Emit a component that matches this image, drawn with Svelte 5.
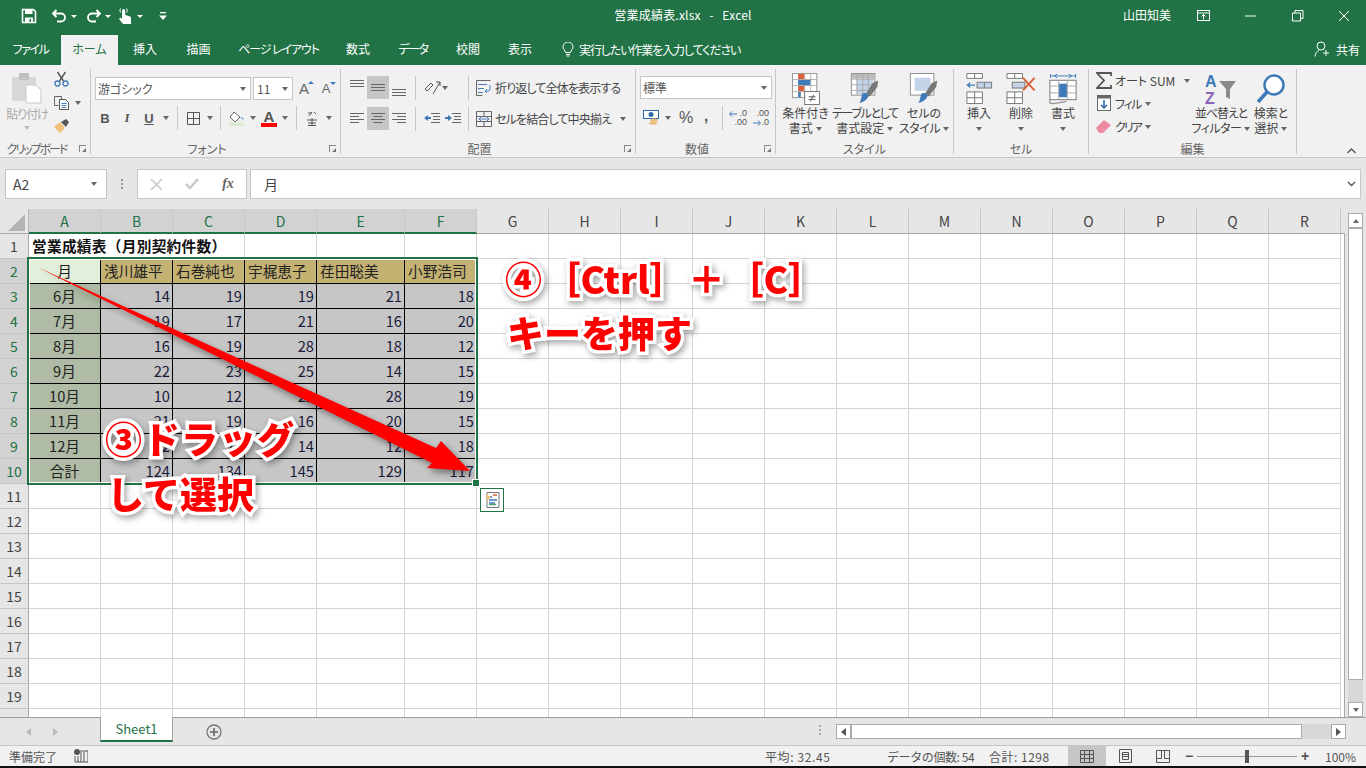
<script>
  const colNames = 'ABCDEFGHIJKLMNOPQR'.split('');
  const table = [
    ['営業成績表（月別契約件数）'],
    ['月', '浅川雄平', '石巻純也', '宇梶恵子', '荏田聡美', '小野浩司'],
    ['6月', 14, 19, 19, 21, 18],
    ['7月', 19, 17, 21, 16, 20],
    ['8月', 16, 19, 28, 18, 12],
    ['9月', 22, 23, 25, 14, 15],
    ['10月', 10, 12, 22, 28, 19],
    ['11月', 21, 19, 16, 20, 15],
    ['12月', 22, 25, 14, 12, 18],
    ['合計', 124, 134, 145, 129, 117]
  ];
  const rows = Array.from({ length: 20 }, (_, i) => i + 1);
  function cellClass(r, c) {
    if (r === 1) return c === 0 ? 'title noline' : c === 1 ? 'noline' : '';
    if (r > 10 || c > 5) return '';
    if (r === 2 && c === 0) return 'tb active center';
    if (r === 2) return 'tb tan';
    if (c === 0) return 'tb month center';
    return 'tb sel numr';
  }
  const cellText = (r, c) => (r <= 10 && table[r - 1][c] !== undefined ? table[r - 1][c] : '');
</script>

<div class="app">
  <div class="titlebar">
    <div class="qat">
      <svg class="i s-save" width="16" height="16" viewBox="0 0 16 16"><path d="M1.500 1.500h11l2 2v11h-13z" fill="none" stroke="#fff" stroke-width="1.600"/><rect x="4" y="2" width="7.500" height="4" fill="#fff"/><rect x="4" y="9.500" width="8" height="5" fill="#fff"/><rect x="8.500" y="11" width="1.500" height="3" fill="#217346"/></svg>
      <svg class="i s-undo" width="16" height="16" viewBox="0 0 16 16"><path d="M5.500 2 2 5.500 5.500 9M2.500 5.500H10a4 4 0 0 1 0 8H6" fill="none" stroke="#fff" stroke-width="1.800"/></svg>
      <span class="wcaret c-undo"></span>
      <svg class="i s-redo" width="16" height="16" viewBox="0 0 16 16"><path d="M10.500 2 14 5.500 10.500 9M13.500 5.500H6a4 4 0 0 0 0 8h4" fill="none" stroke="#fff" stroke-width="1.800"/></svg>
      <span class="wcaret c-redo"></span>
      <svg class="i s-touch" width="14" height="18" viewBox="0 0 14 18"><path d="M4 9V3.500a1.600 1.600 0 0 1 3.200 0V8l4.300 1.200c1 .3 1.500 1 1.500 2V17H5L1.500 12.500c-.8-1 .5-2.200 1.500-1.400L4 12" fill="#fff"/><path d="M2.500 5.500a3.800 3.800 0 0 1 0-4M8.700 1.500a3.800 3.800 0 0 1 0 4" stroke="#fff" fill="none"/></svg>
      <span class="wcaret c-touch"></span>
      <svg class="i s-cust" width="8" height="9" viewBox="0 0 8 9"><rect x="1" y="0" width="6" height="1.300" fill="#fff"/><path d="M0 3.500h8L4 8z" fill="#fff"/></svg>
    </div>
    <div class="doc">営業成績表.xlsx&nbsp;&nbsp;&nbsp;-&nbsp;&nbsp;&nbsp;Excel</div>
    <div class="winctl">
      <span class="uname">山田知美</span>
      <svg class="i w1" width="14" height="12" viewBox="0 0 14 12"><rect x=".5" y=".5" width="12" height="10" fill="none" stroke="#fff"/><path d="M.5 3h12M6.500 9.500V4.500M4.500 6.500l2-2 2 2" stroke="#fff" fill="none"/></svg>
      <svg class="i w2" width="12" height="2" viewBox="0 0 12 2"><rect width="11" height="1" y=".5" fill="#fff"/></svg>
      <svg class="i w3" width="12" height="12" viewBox="0 0 12 12"><path d="M.5 3h8v8h-8zM3 3V.500h8v8H8.500" fill="none" stroke="#fff"/></svg>
      <svg class="i w4" width="12" height="12" viewBox="0 0 12 12"><path d="M1 1l10 10M11 1L1 11" stroke="#fff" fill="none"/></svg>
    </div>
  </div>

  <div class="tabs">
    <span class="tab t61 l15">ファイル</span>
    <span class="tab t57 cur">ホーム</span>
    <span class="tab t54">挿入</span>
    <span class="tab t53">描画</span>
    <span class="tab t107 l1">ページ レイアウト</span>
    <span class="tab t52">数式</span>
    <span class="tab t58 l15">データ</span>
    <span class="tab t52">校閲</span>
    <span class="tab t52">表示</span>
    <span class="tell">
      <svg class="i" width="12" height="15" viewBox="0 0 12 15"><path d="M3.500 10.500C3 8 1 7.500 1 5a5 5 0 0 1 10 0c0 2.500-2 3-2.500 5.500zM4 12.500h4M4.500 14h3" fill="none" stroke="#fff"/></svg>
      <span class="l1">実行したい作業を入力してください</span>
    </span>
    <span class="share">
      <svg class="i" width="16" height="16" viewBox="0 0 16 16"><circle cx="7" cy="5" r="4" fill="none" stroke="#fff"/><path d="M1 15.500c0-3.500 2-5 4-6M9 12h6M12 9v6" fill="none" stroke="#fff"/></svg>
      <span>共有</span>
    </span>
  </div>

  <div class="ribbon">
    <section class="grp g-clip">
      <div class="body clip">
        <div class="paste">
          <svg class="i" width="30" height="31" viewBox="0 0 30 31"><rect x="0" y="4" width="24" height="24" rx="2" fill="#d9d6d6"/><rect x="7" y="0" width="10" height="7" rx="1" fill="#c2bfbf"/><path d="M14 12h10l5 5v13H14z" fill="#fff" stroke="#c8c8c8"/></svg>
          <span class="lbl mut l1">貼り付け</span>
          <span class="dd mutd"></span>
        </div>
        <div class="clipside">
          <svg class="i" width="15" height="16" viewBox="0 0 15 16"><path d="M3.500 1l6 9M11.500 1l-6 9" stroke="#555" stroke-width="1.400" fill="none"/><circle cx="3.500" cy="12.500" r="2.500" fill="none" stroke="#3f7ab8" stroke-width="1.300"/><circle cx="11.500" cy="12.500" r="2.500" fill="none" stroke="#3f7ab8" stroke-width="1.300"/></svg>
          <div class="copyrow">
            <svg class="i" width="16" height="14" viewBox="0 0 16 14"><path d="M.5.500h7v3M.5.500v9h4" fill="none" stroke="#666"/><path d="M5.500 3.500h6l3 3v7h-9z" fill="#fff" stroke="#555"/><path d="M7.500 7.500h5M7.500 9.500h5M7.500 11.500h5" stroke="#4a7ebb"/></svg>
            <span class="dd w14"></span>
          </div>
          <svg class="i" width="16" height="14" viewBox="0 0 16 14"><path d="M0 8l6-5 5 6-5 5z" fill="#f0c27b"/><path d="M7 3l5-3 3 3-3 5z" fill="#555"/></svg>
        </div>
      </div>
      <div class="glabel lp"><span class="l2">クリップボード</span><span class="launch"></span></div>
    </section>

    <section class="grp g-font">
      <div class="body font">
        <div class="frow1">
          <div class="combo fname"><span>游ゴシック</span><span class="dd"></span></div>
          <div class="combo fsize"><span>11</span><span class="dd"></span></div>
          <span class="growA big">A<i class="tri up"></i></span>
          <span class="growA small">A<i class="tri down"></i></span>
        </div>
        <div class="frow2">
          <span class="fb w22 bold">B</span>
          <span class="fb w22 ital">I</span>
          <span class="fb w22 under">U</span>
          <span class="dd w12"></span>
          <span class="vsep m5"></span>
          <span class="fb w20"><svg class="i" width="13" height="13" viewBox="0 0 13 13"><path d="M.5.500h12v12H.5zM6.500.5v12M.5 6.500h12" fill="none" stroke="#555"/></svg></span>
          <span class="dd w14"></span>
          <span class="vsep m3"></span>
          <span class="fb w24"><svg class="i" width="16" height="15" viewBox="0 0 16 15"><path d="M5 1l6 5-5 5-5-5z" fill="#fff" stroke="#666"/><path d="M11 6c2 0 3.500 1 4 3z" fill="#3f7ab8"/><rect x="0" y="12" width="15" height="3" fill="#d8ebd0"/></svg></span>
          <span class="dd w8"></span>
          <span class="fb w24 fontA">A</span>
          <span class="dd w8"></span>
          <span class="vsep m-ph"></span>
          <span class="fb w20"><svg class="i" width="12" height="15" viewBox="0 0 12 15"><path d="M2 2h4M6 1L3 5M8 1l2 2" stroke="#555" fill="none"/><path d="M1 9h10M6 7v8M2 12h8M2 14.500h8" stroke="#555" fill="none"/></svg></span>
          <span class="dd w14"></span>
        </div>
      </div>
      <div class="glabel lp"><span>フォント</span><span class="launch"></span></div>
    </section>

    <section class="grp g-align">
      <div class="body align">
        <div class="arow">
          <span class="ab w20"><svg class="i" width="14" height="20" viewBox="0 0 14 20"><path d="M0 2.500h14M0 5.500h14M0 8.500h14" stroke="#666" fill="none"/></svg></span>
          <span class="ab w22 on"><svg class="i" width="14" height="20" viewBox="0 0 14 20"><path d="M0 6.500h14M0 9.500h14M0 12.500h14" stroke="#666" fill="none"/></svg></span>
          <span class="ab w20"><svg class="i" width="14" height="20" viewBox="0 0 14 20"><path d="M0 11.500h14M0 14.500h14M0 17.500h14" stroke="#666" fill="none"/></svg></span>
          <span class="vsep m6"></span>
          <span class="ab w20"><svg class="i" width="17" height="15" viewBox="0 0 17 15"><path d="M9 14L16 2M16 2h-4M16 2v4" stroke="#555" fill="none"/><path d="M1 9l6-6M3 11l6-6M1 9l2 2M7 3l2 2" stroke="#555" fill="none"/></svg></span>
          <span class="dd w6"></span>
          <span class="vsep m-w1"></span>
          <span class="wrapbtn"><svg class="i" width="17" height="16" viewBox="0 0 17 16"><path d="M.5.500h14M.5 15.500h6M.5.500v15" fill="none" stroke="#666"/><path d="M2 4.500h9M2 8.500h6M2 12.500h5" stroke="#4a7ebb"/><path d="M14 5v4a2 2 0 0 1-2 2H9M11 9l-2 2 2 2" stroke="#4a7ebb" fill="none"/></svg><span class="lbl l08">折り返して全体を表示する</span></span>
        </div>
        <div class="arow">
          <span class="ab w20"><svg class="i" width="14" height="14" viewBox="0 0 14 14"><path d="M0 1.500h14M0 4.500h9M0 7.500h14M0 10.500h9" stroke="#666" fill="none"/></svg></span>
          <span class="ab w22 on"><svg class="i" width="14" height="14" viewBox="0 0 14 14"><path d="M0 1.500h14M2.500 4.500h9M0 7.500h14M2.500 10.500h9" stroke="#666" fill="none"/></svg></span>
          <span class="ab w20"><svg class="i" width="14" height="14" viewBox="0 0 14 14"><path d="M0 1.500h14M5 4.500h9M0 7.500h14M5 10.500h9" stroke="#666" fill="none"/></svg></span>
          <span class="vsep m6"></span>
          <span class="ab w20"><svg class="i" width="16" height="12" viewBox="0 0 16 12"><path d="M7 .5h9M9 3.500h7M9 6.500h7M7 9.500h9" stroke="#666" fill="none"/><path d="M0 5l4-3v2h3v2H4v2z" fill="#3f7ab8"/></svg></span>
          <span class="ab w22"><svg class="i" width="16" height="12" viewBox="0 0 16 12"><path d="M7 .5h9M9 3.500h7M9 6.500h7M7 9.500h9" stroke="#666" fill="none"/><path d="M7 5L3 2v2H0v2h3v2z" fill="#3f7ab8"/></svg></span>
          <span class="vsep m-w2"></span>
          <span class="wrapbtn"><svg class="i" width="17" height="16" viewBox="0 0 17 16"><path d="M.5.500h15v15H.5zM.5 5.500h15M.5 10.500h15M8 .5v5M8 10.500v5" fill="none" stroke="#666"/><path d="M3 8h10" stroke="#4a7ebb"/><path d="M5 6L3 8l2 2M11 6l2 2-2 2" stroke="#4a7ebb" fill="none"/></svg><span class="lbl l08">セルを結合して中央揃え</span><span class="dd w-m"></span></span>
        </div>
      </div>
      <div class="glabel lp"><span>配置</span><span class="launch"></span></div>
    </section>

    <section class="grp g-num">
      <div class="body numbody">
        <div class="combo nfmt"><span>標準</span><span class="dd"></span></div>
        <div class="nrow">
          <span class="fb w20"><svg class="i" width="16" height="16" viewBox="0 0 16 16"><rect x=".5" y=".5" width="15" height="8" fill="#fff" stroke="#2f6aa8"/><circle cx="8" cy="4.500" r="2.500" fill="#2f6aa8"/><ellipse cx="11" cy="10" rx="4" ry="1.500" fill="#eabb72"/><ellipse cx="10" cy="13" rx="4" ry="1.500" fill="#eabb72"/></svg></span>
          <span class="dd w14"></span>
          <span class="fb w22 pct">%</span>
          <span class="fb w18 comma">,</span>
          <span class="vsep m-n"></span>
          <span class="dec"><span>.0</span><span>.00</span><svg class="arr" width="8" height="6" viewBox="0 0 8 6"><path d="M8 3H1M3 .5L.5 3 3 5.500" stroke="#3f7ab8" fill="none"/></svg></span>
          <span class="dec r"><span>.00</span><span>.0</span><svg class="arr" width="8" height="6" viewBox="0 0 8 6"><path d="M0 3h7M5 .5L7.500 3 5 5.500" stroke="#3f7ab8" fill="none"/></svg></span>
        </div>
      </div>
      <div class="glabel lp"><span>数値</span><span class="launch"></span></div>
    </section>

    <section class="grp g-style">
      <div class="body bigs">
        <div class="bigbtn w57">
          <svg class="i" width="32" height="37" viewBox="0 0 32 37"><rect x=".5" y=".5" width="28" height="28" fill="#fff" stroke="#8a8a8a"/><path d="M.5 7.500h28M.5 14.500h28M.5 21.500h28M7.500 0v29M14.500 0v29M21.500 0v29" stroke="#aaa"/><rect x="7" y="1" width="7" height="6" fill="#d9603a"/><rect x="7" y="8" width="14" height="6" fill="#3f7ab8"/><rect x="7" y="15" width="7" height="6" fill="#d9603a"/><rect x="7" y="22" width="3" height="6" fill="#3f7ab8"/><rect x="14.500" y="21.500" width="17" height="15" fill="#fff" stroke="#666"/><path d="M19 27.500h8M19 30.500h8M25 25l-4 8" stroke="#444" fill="none"/></svg>
          <span class="lbl two">条件付き</span><span class="lbl two">書式 <i class="dd in"></i></span>
        </div>
        <div class="bigbtn w62">
          <svg class="i" width="30" height="34" viewBox="0 0 30 34"><rect x=".5" y=".5" width="25" height="23" fill="#fff" stroke="#8a8a8a"/><rect x="1" y="1" width="24" height="5" fill="#bbb"/><rect x="6" y="6" width="18" height="17" fill="#c3d3e8"/><path d="M.5 6.500h25M.5 12.500h25M.5 18.500h25M6.500 1v22M12.500 1v22M18.500 1v22" stroke="#aaa"/><path d="M29 8l-6 3-7 11 4 3 8-10z" fill="#777"/><path d="M12 22c3-2 6 0 7 2-2 6-7 7-10 8 2-3 2-7 3-10z" fill="#3f7ab8"/></svg>
          <span class="lbl two l13">テーブルとして</span><span class="lbl two">書式設定 <i class="dd in"></i></span>
        </div>
        <div class="bigbtn w54">
          <svg class="i" width="30" height="34" viewBox="0 0 30 34"><rect x=".5" y=".5" width="25" height="23" fill="#fff" stroke="#8a8a8a"/><rect x="5" y="5" width="17" height="14" fill="#c3d3e8"/><path d="M29 8l-6 3-7 11 4 3 8-10z" fill="#777"/><path d="M12 22c3-2 6 0 7 2-2 6-7 7-10 8 2-3 2-7 3-10z" fill="#3f7ab8"/></svg>
          <span class="lbl two">セルの</span><span class="lbl two l05">スタイル <i class="dd in"></i></span>
        </div>
      </div>
      <div class="glabel"><span>スタイル</span></div>
    </section>

    <section class="grp g-cells">
      <div class="body cells">
        <div class="bigbtn w42">
          <svg class="i" width="27" height="33" viewBox="0 0 27 33"><path d="M.5.5h16v5H.5zM8.500.5v5M.5 19.500h16v12H.5zM8.500 19.500v12M.5 25.500h16" fill="#fff" stroke="#777"/><rect x="11" y="9.500" width="15" height="6" fill="#c3d3e8" stroke="#777"/><path d="M18.500 9.500v6" stroke="#777"/><path d="M9 12.500H1M4 10l-3 2.500L4 15" stroke="#3f7ab8" stroke-width="1.300" fill="none"/></svg>
          <span class="lbl two">挿入</span><span class="dd in solo"></span>
        </div>
        <div class="bigbtn w42">
          <svg class="i" width="30" height="33" viewBox="0 0 30 33"><path d="M.5.5h16v5H.5zM8.500.5v5M.5 19.500h16v12H.5zM8.500 19.500v12M.5 25.500h16" fill="#fff" stroke="#777"/><rect x="6" y="9.500" width="13" height="6" fill="#c3d3e8" stroke="#777"/><path d="M17 5l12 13M29 5L17 18" stroke="#d9603a" stroke-width="2" fill="none"/></svg>
          <span class="lbl two">削除</span><span class="dd in solo"></span>
        </div>
        <div class="bigbtn w42">
          <svg class="i" width="28" height="33" viewBox="0 0 28 33"><path d="M1 3h26M1 1v4M27 1v4M5 3l3-2M5 3l3 2M23 3l-3-2M23 3l-3 2" stroke="#3f7ab8" fill="none"/><rect x=".5" y="7.500" width="27" height="20" fill="#fff" stroke="#777"/><path d="M.5 13.500h27M.5 20.500h27M9.500 8v20M18.500 8v20" stroke="#aaa"/><rect x="10" y="11" width="8" height="14" fill="#3f7ab8"/><path d="M.5 28v3c4 2 5-1 9 0 4-2 5 0 8-2" stroke="#777" fill="none"/></svg>
          <span class="lbl two">書式</span><span class="dd in solo"></span>
        </div>
      </div>
      <div class="glabel"><span>セル</span></div>
    </section>

    <section class="grp g-edit">
      <div class="body edit">
        <div class="editlist">
          <div class="ed"><svg class="i" width="16" height="17" viewBox="0 0 16 17"><path d="M15 4V1H1l7 7.500L1 16h14v-3" fill="none" stroke="#555" stroke-width="1.800"/></svg><span class="lbl">オート SUM</span><span class="dd w18"></span></div>
          <div class="ed"><svg class="i" width="16" height="17" viewBox="0 0 16 17"><rect x="1.500" y=".5" width="13" height="15" fill="#fff" stroke="#666"/><rect x="1.500" y=".5" width="13" height="3" fill="#666"/><path d="M8 5v8M5 10l3 3 3-3" stroke="#2f6aa8" stroke-width="1.500" fill="none"/></svg><span class="lbl l15">フィル</span><span class="dd w8"></span></div>
          <div class="ed"><svg class="i" width="16" height="13" viewBox="0 0 16 13"><path d="M0 8l8-8 7 5-8 8H3z" fill="#ec8ba0"/></svg><span class="lbl l2">クリア</span><span class="dd w8"></span></div>
        </div>
        <div class="bigbtn w52 tall">
          <svg class="i" width="32" height="32" viewBox="0 0 32 32"><text x="0" y="14" font-size="16" font-weight="700" fill="#3f7ab8" font-family="Liberation Sans">A</text><text x="0" y="31" font-size="16" font-weight="700" fill="#8b62b8" font-family="Liberation Sans">Z</text><path d="M14 8h17l-6 8v10l-4-2v-8z" fill="#8a8a8a"/></svg>
          <span class="lbl two l1">並べ替えと</span><span class="lbl two l05">フィルター <i class="dd in"></i></span>
        </div>
        <div class="bigbtn w48 tall">
          <svg class="i" width="30" height="32" viewBox="0 0 30 32"><circle cx="18" cy="12" r="9.500" fill="#fff" stroke="#3f7ab8" stroke-width="2.500"/><path d="M11 19L2 29" stroke="#3f7ab8" stroke-width="3.500"/></svg>
          <span class="lbl two">検索と</span><span class="lbl two">選択 <i class="dd in"></i></span>
        </div>
      </div>
      <div class="glabel"><span>編集</span></div>
    </section>
    <div class="collapse"><svg class="i" width="9" height="6" viewBox="0 0 9 6"><path d="M.5 5l4-4 4 4" stroke="#555" stroke-width="1.400" fill="none"/></svg></div>
  </div>

  <div class="formula">
    <div class="namebox"><span>A2</span><span class="dd w24"></span></div>
    <div class="dots"><i></i><i></i><i></i></div>
    <div class="fbtns">
      <span class="fbi"><svg class="i" width="13" height="13" viewBox="0 0 13 13"><path d="M1 1l11 11M12 1L1 12" stroke="#c8c8c8" stroke-width="1.500" fill="none"/></svg></span>
      <span class="fbi"><svg class="i" width="14" height="12" viewBox="0 0 14 12"><path d="M1 6l4 4 8-9" stroke="#c8c8c8" stroke-width="2.500" fill="none"/></svg></span>
      <span class="fbi fx">fx</span>
    </div>
    <div class="finput"><span>月</span><svg class="i" width="9" height="6" viewBox="0 0 9 6"><path d="M1 1l3.500 3.500L8 1" stroke="#555" stroke-width="1.400" fill="none"/></svg></div>
  </div>

  <div class="sheetwrap">
    <div class="sheet">
      <div class="grid">
        <div class="corner"><span></span></div>
        {#each colNames as c, i}
          <div class="colh" class:on={i < 6}>{c}</div>
        {/each}
        <div class="fh"></div>
        {#each rows as r}
          <div class="rowh" class:on={r >= 2 && r <= 10}>{r}</div>
          {#each colNames as _, c}
            <div class="cell {cellClass(r, c)}">{cellText(r, c)}</div>
          {/each}
          <div class="fc"></div>
        {/each}
      </div>
      <div class="selection"><span class="handle"></span></div>
      <div class="quick">
        <svg class="i" width="16" height="16" viewBox="0 0 16 16"><path d="M3 .5h12v15H3z" fill="#fff" stroke="#777"/><path d="M5 5h3M5 8h8M5 11h6" stroke="#3f7ab8" stroke-width="1.500"/><path d="M9 3h4" stroke="#d9603a" stroke-width="1.500"/><path d="M5 12.500h7" stroke="#4aa27a" stroke-width="1.500"/><path d="M5 0L1 6h3L2 11l5-7H4z" fill="#f0c27b"/></svg>
      </div>
      <svg class="arrow" width="1341" height="508" viewBox="0 209 1341 508">
        <path d="M37 267 436 448 441 441 470 471 427 468 432 463z" fill="#ff0000"/>
      </svg>
      <div class="note n3a"><span>③ドラッグ</span></div>
      <div class="note n3b"><span>して選択</span></div>
      <div class="note n4a"><span>④ ［Ctrl］ ＋ ［C］</span></div>
      <div class="note n4b"><span>キーを押す</span></div>
    </div>
    <div class="vscroll">
      <span class="vbtn"><i class="tr-up"></i></span>
      <span class="vthumb"></span>
      <span class="vtrack"></span>
      <span class="vbtn"><i class="tr-down"></i></span>
    </div>
  </div>

  <div class="tabbar">
    <div class="navs"><i class="tl"></i><i class="trr"></i></div>
    <div class="sheettab">Sheet1</div>
    <div class="plus"><svg class="i" width="16" height="16" viewBox="0 0 16 16"><circle cx="8" cy="8" r="7" fill="none" stroke="#777" stroke-width="1.300"/><path d="M8 4v8M4 8h8" stroke="#666" stroke-width="1.600"/></svg></div>
    <div class="tabdots"><i></i><i></i><i></i></div>
    <div class="hscroll">
      <span class="hbtn"><i class="tl dark"></i></span>
      <span class="hthumb"></span>
      <span class="htrack"></span>
      <span class="hbtn"><i class="trr dark"></i></span>
    </div>
  </div>

  <div class="status">
    <span class="st-ready">準備完了</span>
    <svg class="i st-mac" width="14" height="14" viewBox="0 0 14 14"><circle cx="3" cy="3" r="3" fill="#555"/><path d="M6 2h8v11H1V7" fill="none" stroke="#555"/><path d="M3 8h9M3 10h9M3 12h9M6 4h6M6 6h6" stroke="#555" stroke-dasharray="2 1"/></svg>
    <span class="st-avg">平均: 32.45</span>
    <span class="st-cnt">データの個数: 54</span>
    <span class="st-sum">合計: 1298</span>
    <span class="view on"><svg class="i" width="14" height="13" viewBox="0 0 14 13"><path d="M.5.500h13v12H.5zM.5 4.500h13M.5 8.500h13M4.500.5v12M9.500.5v12" fill="none" stroke="#555"/></svg></span>
    <span class="view"><svg class="i" width="13" height="14" viewBox="0 0 13 14"><path d="M.5.500h12v13H.5z" fill="none" stroke="#555"/><path d="M3.500 3.500h6v7h-6zM3.500 5.500h6M3.500 7.500h6" fill="none" stroke="#555"/></svg></span>
    <span class="view"><svg class="i" width="14" height="13" viewBox="0 0 14 13"><path d="M.5.500h13v12H.5zM.5 8.500h5v-8M8.500.5v8h5" fill="none" stroke="#555"/></svg></span>
    <span class="zm">−</span>
    <span class="ztrack"><i></i></span>
    <span class="zm">+</span>
    <span class="zpct">100%</span>
  </div>
</div>

<style>
  :global(body) { margin: 0; background: #111; }
  .app { width: 1366px; height: 766px; overflow: hidden; display: flex; flex-direction: column; font-family: "Noto Sans CJK JP", "Noto Sans", sans-serif; color: #444; font-size: 12px; background: #f1f1f1; font-feature-settings: "palt"; }
  .i { display: block; flex: none; }
  .l05 { letter-spacing: -.5px; } .l08 { letter-spacing: -.85px; } .l1 { letter-spacing: -1.100px; } .l13 { letter-spacing: -1.300px; } .l15 { letter-spacing: -1.500px; } .l2 { letter-spacing: -2px; }
  .titlebar { height: 36px; flex: none; box-sizing: border-box; padding-bottom: 4px; background: #217346; color: #fff; display: grid; grid-template-columns: 1fr auto 1fr; align-items: center; }
  .qat { display: flex; align-items: center; padding-left: 21px; }
  .s-undo { margin-left: 14px; }
  .s-redo { margin-left: 9px; }
  .s-touch { margin-left: 7px; }
  .s-cust { margin-left: 16px; }
  .wcaret { width: 0; height: 0; border: 3px solid transparent; border-top: 3px solid #fff; border-bottom: 0; margin-left: 4px; }
  .c-redo { margin-left: 3px; }
  .c-touch { margin-left: 5px; }
  .doc { font-size: 12px; font-feature-settings: normal; letter-spacing: .2px; padding-bottom: 3px; }
  .winctl { display: flex; align-items: center; justify-content: flex-end; padding-right: 16px; }
  .uname { margin-right: 26px; font-feature-settings: normal; padding-bottom: 3px; }
  .w2 { margin-left: 34px; }
  .w3 { margin-left: 35px; }
  .w4 { margin-left: 34px; }

  .tabs { height: 29px; flex: none; background: #217346; color: #fff; display: flex; align-items: stretch; }
  .tab { display: flex; align-items: center; justify-content: center; padding-bottom: 4px; box-sizing: border-box; white-space: nowrap; }
  .t61 { width: 61px; } .t57 { width: 57px; } .t54 { width: 54px; } .t53 { width: 53px; } .t107 { width: 107px; } .t52 { width: 52px; } .t58 { width: 58px; }
  .cur { background: #f1f1f1; color: #217346; margin-top: -1px; height: 30px; }
  .tell { margin-left: 16px; display: flex; align-items: center; gap: 5px; padding-bottom: 3px; }
  .share { margin-left: auto; display: flex; align-items: center; gap: 6px; padding: 0 6px 3px 0; }

  .ribbon { height: 93px; flex: none; box-sizing: border-box; padding-top: 4px; border-bottom: 1px solid #c6c6c6; display: flex; background: #f1f1f1; position: relative; }
  .grp { flex: none; box-sizing: border-box; height: 85px; border-right: 1px solid #c6c6c6; display: flex; flex-direction: column; }
  .g-clip { width: 91px; } .g-font { width: 250px; } .g-align { width: 295px; } .g-num { width: 140px; } .g-style { width: 178px; } .g-cells { width: 135px; } .g-edit { width: 208px; }
  .body { height: 74px; flex: none; display: flex; box-sizing: border-box; }
  .glabel { height: 11px; display: flex; justify-content: center; align-items: center; position: relative; color: #666; white-space: nowrap; line-height: 11px; }
  .lp { padding-right: 17px; }
  .launch { position: absolute; right: 4px; top: 2px; width: 7px; height: 7px; border-left: 1px solid #888; border-top: 1px solid #888; box-sizing: border-box; }
  .launch::after { content: ""; position: absolute; right: 0; bottom: 0; border: 2px solid #777; border-top-color: transparent; border-left-color: transparent; }
  .lbl { white-space: nowrap; line-height: 15px; color: #444; }
  .mut { color: #aaa; }
  .dd { display: flex; align-items: center; justify-content: center; flex: none; }
  .dd::after { content: ""; width: 0; height: 0; border: 3.500px solid transparent; border-top: 4px solid #666; border-bottom: 0; }
  .mutd::after { border-top-color: #bbb; }
  .dd.in { display: inline-flex; vertical-align: middle; width: 7px; height: 8px; margin-top: -2px; }
  .dd.solo { height: 15px; margin-top: 1px; }
  .w6 { width: 6px; } .w8 { width: 8px; } .w12 { width: 12px; } .w14 { width: 14px; } .w-m { width: 16px; margin-left: 2px; }
  .w18 { width: 18px; } .w20 { width: 20px; } .w22 { width: 22px; } .w24 { width: 24px; }
  .w42 { width: 42px; } .w48 { width: 48px; } .w52 { width: 52px; } .w54 { width: 54px; margin-left: 1px; } .w57 { width: 57px; margin-left: 1px; } .w62 { width: 62px; }

  .clip { padding: 4px 0 0 0; }
  .paste { width: 54px; display: flex; flex-direction: column; align-items: center; }
  .paste .lbl { margin-top: 2px; }
  .paste .dd { height: 14px; }
  .clipside { display: flex; flex-direction: column; gap: 9px; margin-top: -2px; }
  .copyrow { display: flex; align-items: center; gap: 1px; }

  .font { flex-direction: column; padding: 8px 0 0 4px; }
  .frow1 { display: flex; align-items: center; height: 23px; }
  .combo { height: 23px; box-sizing: border-box; background: #fff; border: 1px solid #c6c6c6; display: flex; align-items: center; justify-content: space-between; padding: 0 4px 0 2px; white-space: nowrap; color: #555; }
  .fname { width: 156px; }
  .fsize { width: 40px; margin-left: 2px; padding-left: 3px; }
  .growA { position: relative; width: 22px; text-align: center; font-family: "Liberation Sans"; color: #666; line-height: 1; }
  .big { font-size: 15px; }
  .small { font-size: 13px; }
  .tri { position: absolute; right: 1px; top: 0; width: 0; height: 0; border: 3px solid transparent; }
  .tri.up { border-bottom: 3px solid #3f7ab8; border-top: 0; }
  .tri.down { border-top: 3px solid #3f7ab8; border-bottom: 0; }
  .frow2 { display: flex; align-items: center; height: 24px; margin-top: 6px; margin-left: -1px; }
  .fb { display: flex; align-items: center; justify-content: center; flex: none; height: 24px; font-family: "Liberation Sans"; font-size: 13px; color: #555; box-sizing: border-box; }
  .bold { font-weight: 700; }
  .ital { font-style: italic; font-weight: 700; font-family: "Liberation Serif"; }
  .under { text-decoration: underline; font-weight: 700; }
  .fontA { font-size: 15px; position: relative; font-weight: 700; padding-bottom: 4px; }
  .fontA::after { content: ""; position: absolute; left: 4px; right: 4px; bottom: 3px; height: 4px; background: #f00; }
  .vsep { width: 1px; height: 24px; background: #c6c6c6; flex: none; }
  .m3 { margin: 0 4px 0 3px; } .m5 { margin: 0 5px; } .m6 { margin: 0 6px; }
  .m-ph { margin: 0 5px 0 7px; } .m-w1 { margin: 0 7px 0 20px; } .m-w2 { margin: 0 7px 0 4px; } .m-n { margin: 0 4px 0 7px; }

  .align { flex-direction: column; padding: 7px 0 0 6px; gap: 8px; }
  .arow { display: flex; align-items: center; height: 23px; }
  .ab { display: flex; align-items: center; justify-content: center; flex: none; height: 23px; }
  .ab.on { background: #c6c6c6; }
  .wrapbtn { display: flex; align-items: center; gap: 2px; }

  .numbody { flex-direction: column; padding: 7px 0 0 4px; }
  .nfmt { width: 132px; }
  .nrow { display: flex; align-items: center; height: 24px; margin-top: 7px; margin-left: 1px; }
  .pct { font-size: 16px; color: #555; }
  .comma { font-size: 15px; font-weight: 700; padding-bottom: 6px; }
  .dec { position: relative; width: 22px; height: 20px; display: flex; flex-direction: column; align-items: flex-end; font-family: "Liberation Sans"; font-size: 9px; line-height: 9px; color: #555; box-sizing: border-box; padding: 1px 2px 0 0; }
  .arr { position: absolute; left: 2px; top: 3px; }
  .dec.r .arr { top: 12px; left: 4px; }

  .bigs, .cells { padding-top: 4px; }
  .bigbtn { display: flex; flex-direction: column; align-items: center; flex: none; height: 70px; box-sizing: border-box; }
  .bigbtn .i { height: 32px; }
  .bigbtn .two { line-height: 15px; }
  .tall { margin-top: 4px; }
  .cells { padding-left: 4px; }

  .edit { padding: 0; }
  .editlist { width: 106px; padding-left: 7px; box-sizing: border-box; display: flex; flex-direction: column; }
  .ed { height: 23px; display: flex; align-items: center; gap: 3px; }
  .collapse { position: absolute; right: 10px; top: 83px; }

  .formula { height: 51px; flex: none; box-sizing: border-box; padding: 11px 5px 10px 5px; background: #e6e6e6; display: flex; align-items: stretch; }
  .namebox { width: 102px; box-sizing: border-box; border: 1px solid #c6c6c6; background: #fff; display: flex; align-items: center; justify-content: space-between; padding: 0 0 0 7px; font-size: 14px; }
  .dots { width: 30px; display: flex; flex-direction: column; justify-content: center; align-items: center; gap: 2px; }
  .dots i { width: 2px; height: 2px; background: #999; }
  .fbtns { width: 110px; box-sizing: border-box; background: #fff; border: 1px solid #c6c6c6; display: flex; align-items: center; }
  .fbi { width: 36px; display: flex; justify-content: center; }
  .fx { font-family: "Liberation Serif"; font-style: italic; font-weight: 700; font-size: 14px; color: #666; }
  .finput { flex: 1; margin-left: 3px; box-sizing: border-box; background: #fff; border: 1px solid #c6c6c6; display: flex; align-items: center; justify-content: space-between; padding: 0 4px 0 13px; font-size: 14px; }

  .sheetwrap { height: 508px; flex: none; display: flex; background: #fff; }
  .sheet { width: 1345px; flex: none; position: relative; overflow: hidden; background: #fff; font-feature-settings: normal; }
  .grid { display: grid; grid-template-columns: 29px repeat(4, 72px) 88px repeat(13, 72px) 4px; grid-auto-rows: 25px; width: 1345px; }
  .corner { background: #e6e6e6; border-right: 1px solid #b5b5b5; border-bottom: 1px solid #a8a8a8; box-sizing: border-box; position: relative; }
  .corner span { position: absolute; right: 3px; bottom: 2px; width: 0; height: 0; border-left: 17px solid transparent; border-bottom: 17px solid #b4b4b4; }
  .fh { background: #e6e6e6; border-bottom: 1px solid #a8a8a8; box-sizing: border-box; }
  .fc { border-right: 1px solid #a8a8a8; box-sizing: border-box; }
  .colh, .rowh { display: flex; align-items: center; justify-content: center; box-sizing: border-box; background: #e6e6e6; font-size: 14px; color: #444; }
  .colh { border-right: 1px solid #c6c6c6; border-bottom: 1px solid #a8a8a8; }
  .rowh { border-right: 1px solid #a8a8a8; border-bottom: 1px solid #c6c6c6; }
  .colh.on { background: #d2d2d2; color: #217346; border-bottom: 2px solid #217346; }
  .rowh.on { background: #d2d2d2; color: #217346; }
  .cell { box-sizing: border-box; border-right: 1px solid #d4d4d4; border-bottom: 1px solid #d4d4d4; font-size: 14.670px; line-height: 23px; white-space: nowrap; padding: 0 3px; color: #222; min-width: 0; }
  .title { font-weight: 700; color: #111; letter-spacing: .3px; }
  .noline { border-right-color: transparent; }
  .tb { border-right-color: #000; border-bottom-color: #000; }
  .center { text-align: center; }
  .numr { text-align: right; padding-right: 2px; }
  .active { background: #e2efda; }
  .tan { background: #c4b273; }
  .month { background: #afbba4; }
  .sel { background: #c6c6c6; color: #1a1a3a; }

  .selection { position: absolute; left: 27px; top: 48px; width: 451px; height: 228px; box-sizing: border-box; border: 2px solid #217346; box-shadow: inset 0 0 0 1px #fff; }
  .handle { position: absolute; right: -4px; bottom: -4px; width: 6px; height: 6px; background: #217346; border: 1px solid #fff; }
  .quick { position: absolute; left: 480px; top: 279px; width: 24px; height: 24px; box-sizing: border-box; border: 1px solid #217346; background: #fff; display: flex; align-items: center; justify-content: center; }
  .arrow { position: absolute; left: 0; top: 0; filter: drop-shadow(3px 4px 3px rgba(0,0,0,.4)); }
  .note { position: absolute; white-space: pre; font-size: 37px; font-weight: 900; color: #f00; line-height: 44px; filter: drop-shadow(2px 3px 3px rgba(0,0,0,.35)); }
  .note span { -webkit-text-stroke: 7px #fff; paint-order: stroke fill; }
  .n3a { left: 105px; top: 207px; letter-spacing: 1px; }
  .n3b { left: 107px; top: 262px; }
  .n4a { left: 505px; top: 47px; word-spacing: -7px; }
  .n4b { left: 507px; top: 101px; }

  .vscroll { width: 21px; flex: none; box-sizing: border-box; background: #e6e6e6; padding: 4px 3px 0 3px; display: flex; flex-direction: column; }
  .vbtn { height: 15px; flex: none; box-sizing: border-box; border: 1px solid #ababab; background: #fff; display: flex; align-items: center; justify-content: center; }
  .tr-up { width: 0; height: 0; border: 3.500px solid transparent; border-bottom: 4px solid #666; border-top: 0; }
  .tr-down { width: 0; height: 0; border: 3.500px solid transparent; border-top: 4px solid #666; border-bottom: 0; }
  .vthumb { height: 452px; flex: none; box-sizing: border-box; border: 1px solid #ababab; background: #fff; }
  .vtrack { flex: 1; background: #d8d8d8; }

  .tabbar { height: 28px; flex: none; box-sizing: border-box; border-top: 1px solid #9f9f9f; background: #e6e6e6; display: flex; position: relative; align-items: center; font-feature-settings: normal; }
  .navs { width: 100px; display: flex; justify-content: flex-start; gap: 22px; padding-left: 26px; box-sizing: border-box; }
  .tl, .trr { display: block; width: 0; height: 0; border: 4px solid transparent; }
  .tl { border-right: 5px solid #bbb; border-left-width: 0; }
  .trr { border-left: 5px solid #bbb; border-right-width: 0; }
  .tl.dark { border-right-color: #555; }
  .trr.dark { border-left-color: #555; }
  .sheettab { width: 73px; height: 25px; box-sizing: border-box; align-self: flex-start; margin-top: -1px; background: #fff; border-left: 1px solid #9f9f9f; border-right: 1px solid #9f9f9f; border-bottom: 2px solid #217346; color: #217346; font-size: 13px; display: flex; align-items: center; justify-content: center; }
  .plus { margin-left: 33px; }
  .tabdots { position: absolute; left: 819px; top: 7px; display: flex; flex-direction: column; gap: 2px; }
  .tabdots i { width: 2px; height: 2px; background: #aaa; display: block; }
  .hscroll { position: absolute; left: 836px; top: 6px; width: 510px; height: 15px; display: flex; }
  .hbtn { width: 15px; flex: none; box-sizing: border-box; border: 1px solid #ababab; background: #fff; display: flex; align-items: center; justify-content: center; }
  .hthumb { width: 451px; flex: none; box-sizing: border-box; border: 1px solid #ababab; background: #fff; }
  .htrack { flex: 1; background: #d8d8d8; }

  .status { height: 21px; flex: none; box-sizing: border-box; border-top: 1px solid #c6c6c6; background: #f1f1f1; display: flex; align-items: center; color: #555; font-size: 12px; white-space: nowrap; font-feature-settings: normal; }
  .st-ready { margin-left: 9px; width: 65px; }
  .st-avg { margin-left: 677px; width: 122px; letter-spacing: .6px; }
  .st-cnt { width: 102px; letter-spacing: -.4px; }
  .st-sum { width: 79px; letter-spacing: .5px; }
  .view { width: 38px; height: 20px; display: flex; align-items: center; justify-content: center; }
  .view.on { background: #c6c6c6; }
  .zm { width: 14px; text-align: center; font-size: 14px; font-family: "Liberation Sans"; font-weight: 700; color: #555; }
  .ztrack { width: 100px; height: 1px; background: #999; position: relative; margin: 0 1px; }
  .ztrack i { position: absolute; left: 48px; top: -6px; width: 4px; height: 13px; background: #555; }
  .zpct { margin-left: 13px; }
</style>
